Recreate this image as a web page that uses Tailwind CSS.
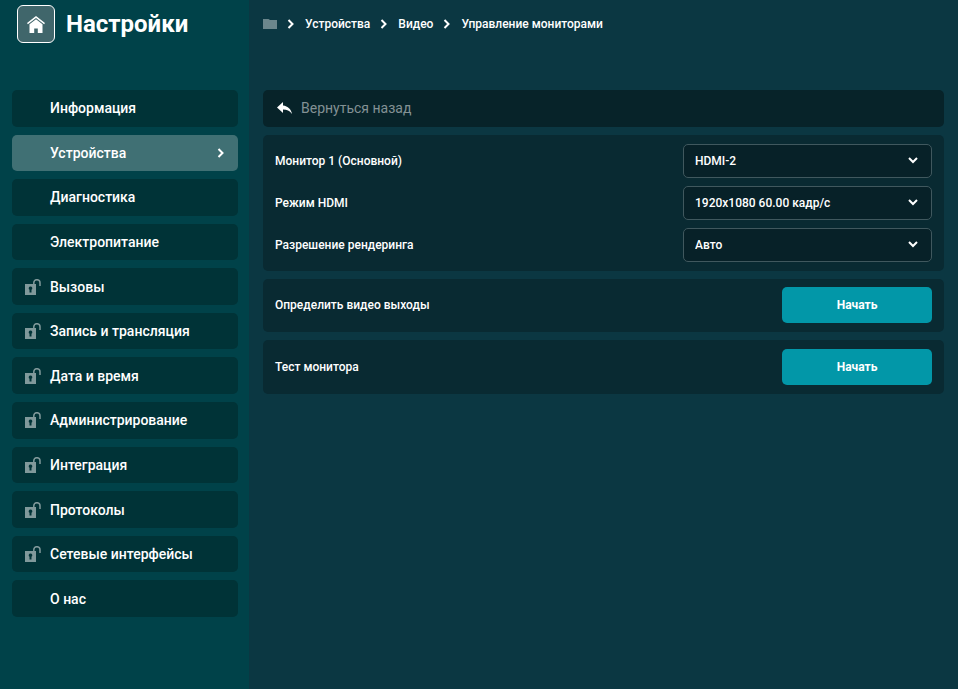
<!DOCTYPE html>
<html lang="ru">
<head>
    <meta charset="UTF-8">
    <meta name="viewport" content="width=device-width, initial-scale=1.0">
    <title>Настройки</title>
    <script src="https://cdn.jsdelivr.net/npm/@tailwindcss/browser@4"></script>
</head>
<body class="bg-[#0b3742] text-white font-['Roboto',sans-serif] font-medium">
    <!-- Shared icons -->
    <svg class="hidden" xmlns="http://www.w3.org/2000/svg">
        <symbol id="icon-lock" viewBox="0 0 16 16">
            <path d="M0 5h11v11H0z M5.500 7.500a1.800 1.800 0 0 0-1 3.300V13.500h2v-2.700A1.800 1.800 0 0 0 5.500 7.500z" fill="currentColor" fill-rule="evenodd"></path>
            <path d="M8.800 5V3.800a3.100 3.100 0 0 1 6.200 0V7" fill="none" stroke="currentColor" stroke-width="1.500"></path>
        </symbol>
        <symbol id="icon-chevron" viewBox="0 0 8 10">
            <path d="M1.500 1l4 4-4 4" fill="none" stroke="currentColor" stroke-width="2"></path>
        </symbol>
        <symbol id="icon-down" viewBox="0 0 10 8">
            <path d="M1 2l4 4 4-4" fill="none" stroke="currentColor" stroke-width="2"></path>
        </symbol>
    </svg>

    <div class="flex min-h-screen">
        <!-- Sidebar -->
        <aside class="w-[249px] shrink-0 bg-[#004249] pl-3 pr-[11px]">
            <header class="flex items-center gap-[11px] h-12 pl-[5px] mb-[42px]">
                <a href="#" aria-label="Главная" class="flex items-center justify-center size-[38px] rounded-md border border-white bg-[#40666b]">
                    <svg class="w-[18px] h-[17px]" viewBox="0 0 18 17" fill="currentColor">
                        <path d="M9 0L0 7l.9 1.200L9 2l8.100 6.200L18 7z"></path>
                        <path d="M9 3.200L2.500 8.300V17h4.700v-4.500h3.600V17h4.700V8.300z"></path>
                    </svg>
                </a>
                <h1 class="text-2xl font-bold">Настройки</h1>
            </header>

            <nav class="grid auto-rows-fr gap-2 h-[527px] text-sm">
                <a href="#" class="flex items-center rounded-[5px] bg-[#003337] pl-[38px]">Информация</a>
                <a href="#" class="flex items-center justify-between rounded-[5px] bg-[#407074] pl-[38px] pr-[13px]">
                    Устройства
                    <svg class="w-2 h-2.5"><use href="#icon-chevron"></use></svg>
                </a>
                <a href="#" class="flex items-center rounded-[5px] bg-[#003337] pl-[38px]">Диагностика</a>
                <a href="#" class="flex items-center rounded-[5px] bg-[#003337] pl-[38px]">Электропитание</a>
                <a href="#" class="flex items-center gap-[9px] rounded-[5px] bg-[#003337] pl-[13px]">
                    <svg class="size-4 text-[#80999b]"><use href="#icon-lock"></use></svg>
                    Вызовы
                </a>
                <a href="#" class="flex items-center gap-[9px] rounded-[5px] bg-[#003337] pl-[13px]">
                    <svg class="size-4 text-[#80999b]"><use href="#icon-lock"></use></svg>
                    Запись и трансляция
                </a>
                <a href="#" class="flex items-center gap-[9px] rounded-[5px] bg-[#003337] pl-[13px]">
                    <svg class="size-4 text-[#80999b]"><use href="#icon-lock"></use></svg>
                    Дата и время
                </a>
                <a href="#" class="flex items-center gap-[9px] rounded-[5px] bg-[#003337] pl-[13px]">
                    <svg class="size-4 text-[#80999b]"><use href="#icon-lock"></use></svg>
                    Администрирование
                </a>
                <a href="#" class="flex items-center gap-[9px] rounded-[5px] bg-[#003337] pl-[13px]">
                    <svg class="size-4 text-[#80999b]"><use href="#icon-lock"></use></svg>
                    Интеграция
                </a>
                <a href="#" class="flex items-center gap-[9px] rounded-[5px] bg-[#003337] pl-[13px]">
                    <svg class="size-4 text-[#80999b]"><use href="#icon-lock"></use></svg>
                    Протоколы
                </a>
                <a href="#" class="flex items-center gap-[9px] rounded-[5px] bg-[#003337] pl-[13px]">
                    <svg class="size-4 text-[#80999b]"><use href="#icon-lock"></use></svg>
                    Сетевые интерфейсы
                </a>
                <a href="#" class="flex items-center rounded-[5px] bg-[#003337] pl-[38px]">О нас</a>
            </nav>
        </aside>

        <!-- Content -->
        <main class="flex-1 min-w-0 px-[14px] text-xs">
            <!-- Breadcrumbs -->
            <nav class="flex items-center gap-2.5 h-12 mb-[42px]">
                <a href="#" aria-label="Корень">
                    <svg class="w-[14px] h-[10px] text-[#6b868c]" viewBox="0 0 14 10" fill="currentColor">
                        <path d="M0 0h5.500L7 1h7v9H0z"></path>
                    </svg>
                </a>
                <svg class="w-2 h-2.5"><use href="#icon-chevron"></use></svg>
                <a href="#">Устройства</a>
                <svg class="w-2 h-2.5"><use href="#icon-chevron"></use></svg>
                <a href="#">Видео</a>
                <svg class="w-2 h-2.5"><use href="#icon-chevron"></use></svg>
                <a href="#">Управление мониторами</a>
            </nav>

            <div class="flex flex-col gap-2">
                <a href="#" class="flex items-center gap-[9px] h-[37px] rounded-[5px] bg-[#072329] pl-[14px] pb-px text-sm font-normal text-[#839194]">
                    <svg class="w-[15px] h-3 text-white" viewBox="0 0 15 12" fill="currentColor">
                        <path d="M6 0L0 5.500 6 11V7.600c4 0 6.500 1.200 9 4.400C14 7 11 4 6 3.400z"></path>
                    </svg>
                    Вернуться назад
                </a>

                <!-- Monitor settings -->
                <section class="flex flex-col gap-2 rounded-[5px] bg-[#092a32] py-[9px] px-3">
                    <div class="flex items-center justify-between">
                        <label for="monitor">Монитор 1 (Основной)</label>
                        <div class="relative w-[249px]">
                            <select id="monitor" class="appearance-none w-full h-[34px] rounded-[5px] border border-[#40585e] bg-[#072128] px-[11px]">
                                <option>HDMI-2</option>
                            </select>
                            <svg class="absolute right-[14px] top-3 w-2.5 h-2 pointer-events-none"><use href="#icon-down"></use></svg>
                        </div>
                    </div>
                    <div class="flex items-center justify-between">
                        <label for="mode">Режим HDMI</label>
                        <div class="relative w-[249px]">
                            <select id="mode" class="appearance-none w-full h-[34px] rounded-[5px] border border-[#40585e] bg-[#072128] px-[11px]">
                                <option>1920x1080 60.00 кадр/с</option>
                            </select>
                            <svg class="absolute right-[14px] top-3 w-2.5 h-2 pointer-events-none"><use href="#icon-down"></use></svg>
                        </div>
                    </div>
                    <div class="flex items-center justify-between">
                        <label for="render">Разрешение рендеринга</label>
                        <div class="relative w-[249px]">
                            <select id="render" class="appearance-none w-full h-[34px] rounded-[5px] border border-[#40585e] bg-[#072128] px-[11px]">
                                <option>Авто</option>
                            </select>
                            <svg class="absolute right-[14px] top-3 w-2.5 h-2 pointer-events-none"><use href="#icon-down"></use></svg>
                        </div>
                    </div>
                </section>

                <section class="flex items-center justify-between rounded-[5px] bg-[#092a32] pt-2 pb-[9px] px-3">
                    <span id="detect">Определить видео выходы</span>
                    <button type="button" aria-describedby="detect" class="w-[150px] h-9 rounded-[5px] bg-[#0297a8] font-bold">Начать</button>
                </section>

                <section class="flex items-center justify-between rounded-[5px] bg-[#092a32] py-[9px] px-3">
                    <span id="test">Тест монитора</span>
                    <button type="button" aria-describedby="test" class="w-[150px] h-9 rounded-[5px] bg-[#0297a8] font-bold">Начать</button>
                </section>
            </div>
        </main>
    </div>
</body>
</html>
